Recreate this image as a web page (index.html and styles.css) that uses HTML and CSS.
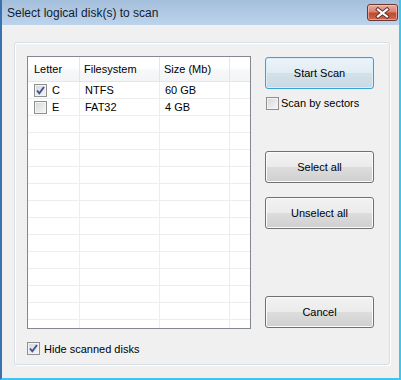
FILE: index.html
```html
<!DOCTYPE html>
<html lang="en">
<head>
    <meta charset="UTF-8">
    <title>Select logical disk(s) to scan</title>
    <link rel="stylesheet" href="styles.css">
</head>
<body>
    <div class="window">
        <div class="titlebar">
            <span class="title">Select logical disk(s) to scan</span>
            <button class="close-button">
                <svg width="31" height="17" viewBox="0 0 31 17">
                    <path d="M11 5.5 L20 12.5 M20 5.5 L11 12.5" stroke="#5a2a26" stroke-width="4" stroke-linecap="square"/>
                    <path d="M11 5.5 L20 12.5 M20 5.5 L11 12.5" stroke="#fff" stroke-width="2.2" stroke-linecap="square"/>
                </svg>
            </button>
        </div>
        <div class="client">
            <div class="group">
                <div class="left-col">
                    <div class="list">
                        <div class="list-head">
                            <div class="cell col-letter">Letter</div>
                            <div class="cell col-fs">Filesystem</div>
                            <div class="cell col-size">Size (Mb)</div>
                            <div class="cell col-rest"></div>
                        </div>
                        <div class="list-body">
                            <div class="row">
                                <div class="cell col-letter"><span class="check checked"></span>C</div>
                                <div class="cell col-fs">NTFS</div>
                                <div class="cell col-size">60 GB</div>
                            </div>
                            <div class="row">
                                <div class="cell col-letter"><span class="check"></span>E</div>
                                <div class="cell col-fs">FAT32</div>
                                <div class="cell col-size">4 GB</div>
                            </div>
                        </div>
                    </div>
                    <div class="check-row hide-row"><span class="check checked"></span>Hide scanned disks</div>
                </div>
                <div class="right-col">
                    <button class="btn btn-default">Start Scan</button>
                    <div class="check-row sectors-row"><span class="check"></span>Scan by sectors</div>
                    <button class="btn select-btn">Select all</button>
                    <button class="btn unselect-btn">Unselect all</button>
                    <button class="btn cancel-btn">Cancel</button>
                </div>
            </div>
        </div>
    </div>
</body>
</html>
```

FILE: styles.css
```css
body {
    margin: 0;
    overflow: hidden;
    font-family: "Liberation Sans", Arial, sans-serif;
    font-size: 11px;
    color: #000;
}

.window {
    width: 401px;
    height: 380px;
    box-sizing: border-box;
    border-left: 2px solid #3a72ad;
    border-right: 2px solid #3ec6ee;
    border-bottom: 2px solid #3ec6ee;
    background: #f0f0f0;
    display: flex;
    flex-direction: column;
}

.titlebar {
    height: 25px;
    flex: none;
    display: flex;
    align-items: flex-start;
    background: linear-gradient(#a4bfdc, #bcd3ec);
}

.title {
    margin: 6px 0 0 5px;
    font-size: 12px;
    color: #121c2e;
}

.close-button {
    margin: 4px 1px 0 auto;
    width: 31px;
    height: 17px;
    padding: 0;
    border: 1px solid #6b3530;
    border-radius: 3px;
    background: linear-gradient(#e8aa9e 0%, #d98370 45%, #c2492f 55%, #cf6a4f 100%);
    box-shadow: inset 0 0 0 1px rgba(255, 220, 210, 0.5);
    display: flex;
    align-items: center;
    justify-content: center;
    overflow: hidden;
}

.close-button svg {
    flex: none;
    margin: -1px;
}

.client {
    flex: 1;
    padding: 17px 9px 13px 12px;
    display: flex;
}

.group {
    flex: 1;
    display: flex;
    gap: 14px;
    padding: 13px 0 0 12px;
    border: 1px solid #d5dfe5;
    border-radius: 3px;
    box-shadow: inset 1px 1px 0 #fff, 1px 1px 0 #fff;
}

.left-col {
    width: 224px;
    display: flex;
    flex-direction: column;
}

.list {
    height: 273px;
    box-sizing: border-box;
    border: 1px solid #828790;
    background: #fff;
    display: flex;
    flex-direction: column;
}

.list-head {
    height: 24px;
    flex: none;
    display: flex;
    border-bottom: 1px solid #e5e5e5;
    background: linear-gradient(#fff 0%, #fff 45%, #f7f8f9 55%, #f3f4f6 100%);
}

.list-head .cell {
    line-height: 25px;
    border-right: 1px solid #e3e5e8;
}

.list-head .col-rest {
    border-right: none;
}

.cell {
    box-sizing: border-box;
    white-space: nowrap;
    display: flex;
    align-items: center;
}

.col-letter { width: 52px; padding-left: 6px; }
.col-fs { width: 80px; padding-left: 4px; }
.col-size { width: 70px; padding-left: 4px; }
.col-rest { flex: 1; }

.list-body {
    flex: 1;
    background-image:
        linear-gradient(to right, transparent 51px, #ededed 51px 52px, transparent 52px 131px, #ededed 131px 132px, transparent 132px 201px, #ededed 201px 202px, transparent 202px),
        repeating-linear-gradient(to bottom, transparent 0 16px, #ededed 16px 17px);
}

.row {
    height: 17px;
    display: flex;
}

.row .cell {
    height: 16px;
}

.row .col-fs,
.row .col-size {
    padding-left: 5px;
}

.check {
    width: 13px;
    height: 13px;
    box-sizing: border-box;
    flex: none;
    border: 1px solid #8e8f8f;
    background: linear-gradient(135deg, #d4d6d9, #f7f7f7);
    box-shadow: inset 0 0 0 1px #f4f4f4;
    margin-right: 5px;
}

.check.checked {
    background:
        url("data:image/svg+xml;utf8,<svg xmlns='http://www.w3.org/2000/svg' width='11' height='11'><path d='M2 5.5 L4.3 8.3 L9 2' fill='none' stroke='%233d5196' stroke-width='1.9'/></svg>") center / 11px 11px no-repeat,
        linear-gradient(135deg, #d4d6d9, #f7f7f7);
}

.check-row {
    display: flex;
    align-items: center;
    white-space: nowrap;
}

.hide-row {
    margin-top: 13px;
}

.hide-row .check {
    margin-right: 4px;
}

.right-col {
    width: 109px;
    display: flex;
    flex-direction: column;
}

.btn {
    height: 32px;
    padding: 0;
    font-family: inherit;
    font-size: 11px;
    color: #000;
    border: 1px solid #707070;
    border-radius: 3px;
    background: linear-gradient(#f2f2f2 0%, #ebebeb 50%, #dddddd 50%, #cfcfcf 100%);
    box-shadow: inset 0 0 0 1px #fbfbfb;
}

.btn-default {
    margin-top: 1px;
    border-color: #3aa2dc;
    background: linear-gradient(#ebf4f9 0%, #e1ecf2 50%, #d3e2ea 50%, #c9d9e2 100%);
    box-shadow: inset 0 0 0 1px #d6f1fd;
}

.sectors-row {
    margin-top: 8px;
    height: 12px;
}

.sectors-row .check {
    margin-left: 1px;
    margin-right: 2px;
}

.select-btn { margin-top: 42px; }
.unselect-btn { margin-top: 14px; }
.cancel-btn { margin-top: 67px; }
```
